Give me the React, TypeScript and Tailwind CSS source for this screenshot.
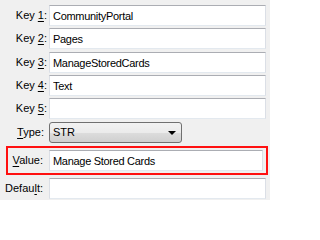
import { useState } from "react";

const font = { fontFamily: '"Liberation Sans", Arial, sans-serif' };

interface FieldProps {
  label: string;
  hotkey: number;
  value: string;
  labelPad: string;
  onChange: (v: string) => void;
}

function Label({ label, hotkey, labelPad }: { label: string; hotkey: number; labelPad: string }) {
  return (
    <label className={`w-[49px] shrink-0 text-right text-[11px] leading-[13px] text-black whitespace-nowrap ${labelPad}`}>
      {label.slice(0, hotkey)}
      <span className="underline underline-offset-[2px]">{label[hotkey]}</span>
      {label.slice(hotkey + 1)}
    </label>
  );
}

function TextField({ label, hotkey, value, labelPad, onChange }: FieldProps) {
  return (
    <div className="flex h-[21px] items-center">
      <Label label={label} hotkey={hotkey} labelPad={labelPad} />
      <input
        value={value}
        onChange={(e) => onChange(e.target.value)}
        className="h-[21px] w-[217px] border border-t-[#abadb3] border-x-[#dbdfe6] border-b-[#e3e9ef] bg-white pl-[3px] text-[11px] tracking-[-0.3px] text-black outline-none"
      />
    </div>
  );
}

export default function App() {
  const [keys, setKeys] = useState(["CommunityPortal", "Pages", "ManageStoredCards", "Text", ""]);
  const [value, setValue] = useState("Manage Stored Cards");
  const [def, setDef] = useState("");

  const setKey = (i: number, v: string) => setKeys(keys.map((k, j) => (j === i ? v : k)));

  return (
    <div className="h-[200px] w-[270px] overflow-hidden bg-[#f0f0f0]" style={font}>
      <div className="flex flex-col pt-[5px]">
        <TextField label="Key 1:" hotkey={4} value={keys[0]} labelPad="pr-[2px]" onChange={(v) => setKey(0, v)} />
        <div className="mt-[2px]">
          <TextField label="Key 2:" hotkey={4} value={keys[1]} labelPad="pr-[2px]" onChange={(v) => setKey(1, v)} />
        </div>
        <div className="mt-[3px]">
          <TextField label="Key 3:" hotkey={4} value={keys[2]} labelPad="pr-[2px]" onChange={(v) => setKey(2, v)} />
        </div>
        <div className="mt-[2px]">
          <TextField label="Key 4:" hotkey={4} value={keys[3]} labelPad="pr-[2px]" onChange={(v) => setKey(3, v)} />
        </div>
        <div className="mt-[2px]">
          <TextField label="Key 5:" hotkey={4} value={keys[4]} labelPad="pr-[2px]" onChange={(v) => setKey(4, v)} />
        </div>

        {/* Type combo */}
        <div className="mt-[3px] flex h-[21px] items-center">
          <Label label="Type:" hotkey={0} labelPad="pr-[5px]" />
          <div className="relative flex h-[21px] w-[133px] items-center rounded-[3px] border border-[#707070] bg-[linear-gradient(to_bottom,#f2f2f2_0%,#ebebeb_50%,#dddddd_50%,#cfcfcf_100%)] pl-[3px] text-[11px] text-black">
            STR
            <span className="absolute right-[5px] top-[8px] h-0 w-0 border-x-[4px] border-t-[4px] border-x-transparent border-t-black" />
          </div>
        </div>

        {/* Highlighted value row */}
        <div className="mt-[3px] ml-[6px] flex h-[29px] w-[262px] items-center border-2 border-[#ff1010]">
          <div className="flex h-[21px] items-center -ml-[8px]">
            <Label label="Value:" hotkey={0} labelPad="pr-[6px]" />
            <input
              value={value}
              onChange={(e) => setValue(e.target.value)}
              className="h-[21px] w-[214px] border border-t-[#abadb3] border-x-[#dbdfe6] border-b-[#e3e9ef] bg-white pl-[3px] text-[11px] tracking-[-0.3px] text-black outline-none"
            />
          </div>
        </div>

        <div className="mt-[3px]">
          <TextField label="Default:" hotkey={5} value={def} labelPad="pr-[6px]" onChange={setDef} />
        </div>
      </div>
    </div>
  );
}
